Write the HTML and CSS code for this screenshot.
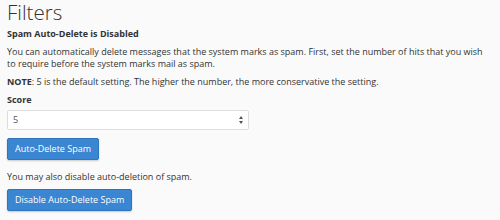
FILE: index.html
```html
<!DOCTYPE html>
<html lang="en">
<head>
    <meta charset="UTF-8">
    <title>Filters</title>
    <link rel="stylesheet" href="styles.css">
</head>
<body>
    <div class="page">
        <h1>Filters</h1>
        <h4>Spam Auto-Delete is Disabled</h4>
        <p>You can automatically delete messages that the system marks as spam. First, set the number of hits that you wish to require before the system marks mail as spam.</p>
        <p><strong>NOTE</strong>: 5 is the default setting. The higher the number, the more conservative the setting.</p>
        <label class="field-label" for="score">Score</label>
        <div class="select-wrap">
            <select id="score">
                <option>5</option>
            </select>
            <span class="arrows"></span>
        </div>
        <button class="btn">Auto-Delete Spam</button>
        <p>You may also disable auto-deletion of spam.</p>
        <button class="btn">Disable Auto-Delete Spam</button>
    </div>
</body>
</html>
```

FILE: styles.css
```css
* {
  box-sizing: border-box;
}

html, body {
  margin: 0;
  background: #fafafa;
}

body {
  font: normal 9px/12px "Open Sans", sans-serif;
  color: #333;
}

.page {
  padding: 0 7px;
}

h1 {
  margin: 0;
  font-size: 20.5px;
  line-height: 25px;
  font-weight: 300;
  color: #333;
}

h4 {
  margin: 3px 0 6px;
  font-size: 9px;
  font-weight: 700;
}

p {
  margin: 0 0 6px;
}

.field-label {
  display: block;
  font-weight: 700;
  margin: 0 0 4px;
}

.select-wrap {
  position: relative;
  width: 242px;
  margin-bottom: 8px;
}

select {
  display: block;
  width: 100%;
  height: 20px;
  padding: 0 5px;
  font: inherit;
  color: #555;
  background: #fff;
  border: 1px solid #ddd;
  border-radius: 2px;
  -webkit-appearance: none;
  appearance: none;
}

.arrows {
  position: absolute;
  right: 6px;
  top: 6px;
  width: 0;
  height: 0;
  border-left: 2px solid transparent;
  border-right: 2px solid transparent;
  border-bottom: 3px solid #555;
}
.arrows::after {
  content: "";
  position: absolute;
  left: -2px;
  top: 5px;
  border-left: 2px solid transparent;
  border-right: 2px solid transparent;
  border-top: 3px solid #555;
}

.btn {
  display: block;
  height: 22px;
  padding: 0 7px;
  font: inherit;
  color: #fff;
  background: #3a86d2;
  border: 1px solid #2f75bc;
  border-radius: 2px;
  box-shadow: 0 1px 2px rgba(0, 0, 0, 0.2);
  margin-bottom: 11px;
}
```
